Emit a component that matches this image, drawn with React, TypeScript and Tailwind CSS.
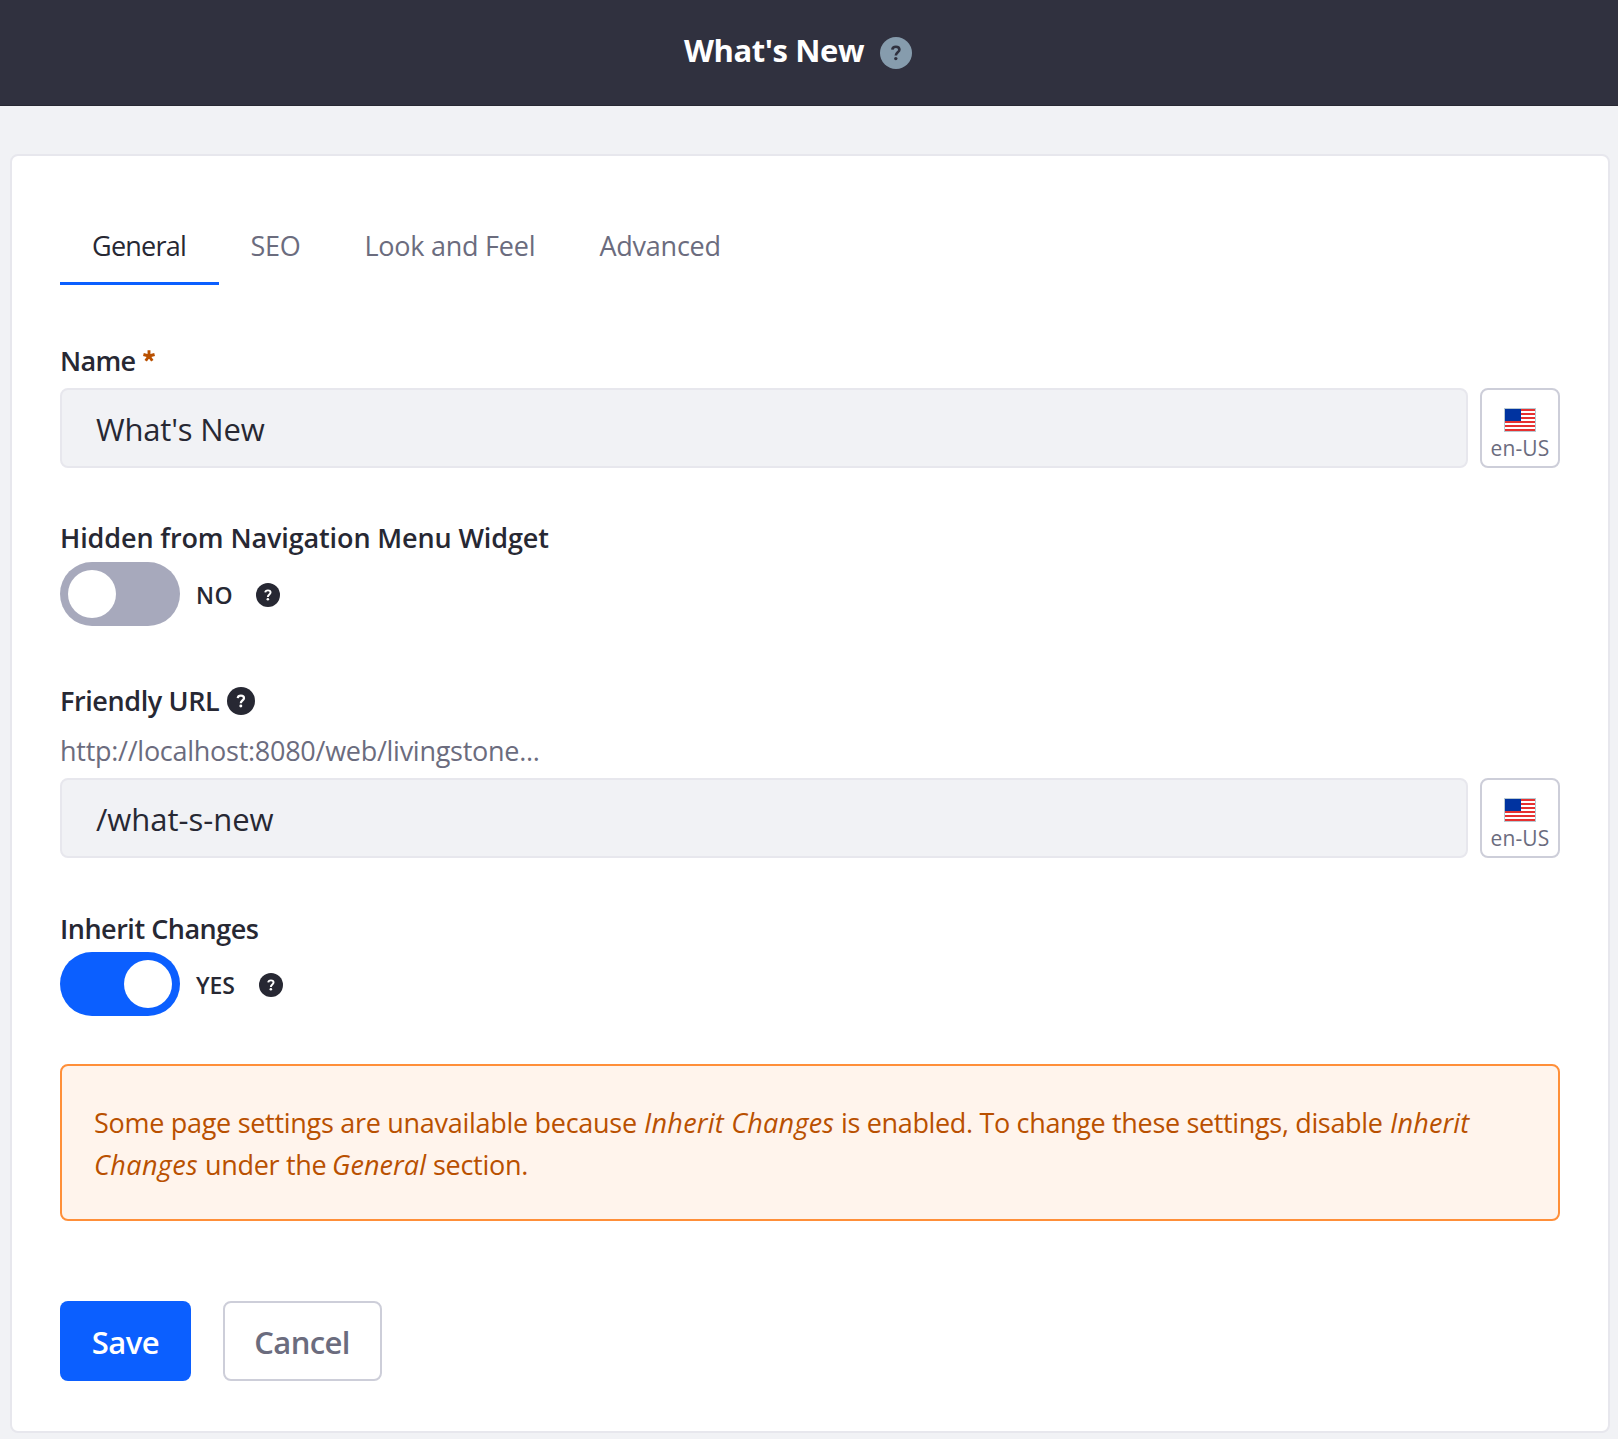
import type { ReactNode } from "react";

function HelpIcon({ className }: { className: string }) {
  return (
    <svg viewBox="0 0 32 32" className={"shrink-0 " + className} aria-hidden="true">
      <circle cx="16" cy="16" r="16" fill="currentColor" />
      <path
        d="M12.3 12.6C12.5 10.7 14 9.8 15.9 9.8c2 0 3.5 1 3.5 3 0 2.5-3.6 2.7-3.6 5.8"
        fill="none"
        className="stroke-(--mark)"
        strokeWidth="2.6"
      />
      <circle cx="15.8" cy="21.6" r="1.7" className="fill-(--mark)" />
    </svg>
  );
}

function Asterisk() {
  return (
    <svg viewBox="0 0 12 12" className="mt-[10px] h-3 w-3 shrink-0 text-[#b95000]" aria-hidden="true">
      <path
        d="M6 6V.2M6 6 .4 4.5M6 6l5.6-1.5M6 6l-3.3 4.8M6 6l3.3 4.8"
        fill="none"
        stroke="currentColor"
        strokeWidth="2.9"
      />
    </svg>
  );
}

function FlagUS() {
  return (
    <svg viewBox="0 0 32 24" className="h-6 w-8" shapeRendering="crispEdges" aria-hidden="true">
      <rect width="32" height="24" fill="#b9c9d2" />
      <rect x="1" y="1" width="30" height="22" fill="#fff" />
      {[1, 5, 9, 13, 17, 21].map((y) => (
        <rect key={y} x="1" y={y} width="30" height="2" fill="#e63030" />
      ))}
      <rect x="1" y="1" width="16" height="12" fill="#0033a0" />
    </svg>
  );
}

function Field({ children }: { children: ReactNode }) {
  return (
    <div className="flex gap-3">
      <div className="h-20 w-[1408px] rounded-lg border-2 border-[#e7e7ed] bg-[#f1f2f5] pt-px pl-[34px] text-[31px] leading-[76px]">
        {children}
      </div>
      <button className="flex h-20 w-20 flex-col items-center rounded-lg border-2 border-[#cdced9] bg-white pt-[18px] text-[#6b6c7e]">
        <FlagUS />
        <span className="text-[21px] leading-8 tracking-[0.15px]">en-US</span>
      </button>
    </div>
  );
}

function Toggle({ on }: { on?: boolean }) {
  return (
    <div
      className={
        "flex h-16 w-[120px] items-center rounded-full px-2 " +
        (on ? "justify-end bg-[#0b5fff]" : "justify-start bg-[#a7a9bc]")
      }
    >
      <div className="h-12 w-12 rounded-full bg-white" />
    </div>
  );
}

export default function App() {
  return (
    <div className="h-[1439px] w-[1618px] overflow-hidden bg-[#f1f2f5] font-['Open_Sans',sans-serif] text-[27px] text-[#272833]">
      <header className="flex h-[106px] items-start border-b border-[#272833] bg-[#30313f] pl-[684px]">
        <h1 className="mt-[30px] w-[196px] text-[31px] leading-10 font-bold tracking-[-0.43px] whitespace-nowrap text-white">
          What's New
        </h1>
        <HelpIcon className="mt-[37px] h-8 w-8 text-[#869cad] [--mark:#30313f]" />
      </header>

      <main className="mt-12 ml-[10px] h-[1279px] w-[1600px] rounded-lg border-2 border-[#e7e7ed] bg-white px-12 pt-[53px]">
        <nav className="flex h-[76px] leading-[73px] whitespace-nowrap text-[#6b6c7e]">
          <div className="w-[159px] border-b-3 border-[#0b5fff] pl-8 tracking-[-0.75px] text-[#272833]">General</div>
          <div className="w-[114px] pl-[31.5px] tracking-[-0.3px]">SEO</div>
          <div className="w-[235px] pl-[31.5px] tracking-[-0.25px]">Look and Feel</div>
          <div className="pl-[31.5px] tracking-[-0.25px]">Advanced</div>
        </nav>

        <div className="mt-[55px] mb-[7px] flex h-[41px] leading-[41px] font-semibold">
          <span className="w-[83px] tracking-[-0.7px]">Name</span>
          <Asterisk />
        </div>
        <Field>
          <span className="tracking-[-0.18px]">What's New</span>
        </Field>

        <div className="mt-[49px] h-[41px] leading-[41px] font-semibold tracking-[-0.12px]">
          Hidden from Navigation Menu Widget
        </div>
        <div className="mt-1 flex items-center">
          <Toggle />
          <span className="mt-[2px] ml-4 w-[60px] text-[23px] leading-8 font-semibold tracking-[0.4px]">NO</span>
          <HelpIcon className="mt-[2px] h-6 w-6 [--mark:#fff]" />
        </div>

        <div className="mt-[54px] flex h-[41px] leading-[41px] font-semibold">
          <span className="w-[167px] tracking-[-0.4px]">Friendly URL</span>
          <HelpIcon className="mt-[7px] h-7 w-7 [--mark:#fff]" />
        </div>
        <div className="mt-[9px] mb-[7px] h-[41px] leading-[41px] tracking-[-0.27px] text-[#6b6c7e]">
          http://localhost:8080/web/livingstone...
        </div>
        <Field>
          <span className="tracking-[-0.02px]">/what-s-new</span>
        </Field>

        <div className="mt-[50px] h-[41px] leading-[41px] font-semibold tracking-[-0.48px]">Inherit Changes</div>
        <div className="mt-[3px] flex items-center">
          <Toggle on />
          <span className="mt-[2px] ml-4 w-[63px] text-[23px] leading-8 font-semibold tracking-[-0.1px]">YES</span>
          <HelpIcon className="mt-[2px] h-6 w-6 [--mark:#fff]" />
        </div>

        <div className="mt-12 h-[157px] rounded-lg border-2 border-[#ff8f39] bg-[#fff4ec] pt-[36px] pl-8 leading-[42px] whitespace-nowrap text-[#b95000]">
          <p className="flex">
            <span className="w-[550px] tracking-[-0.29px]">Some page settings are unavailable because </span>
            <em className="w-[197px] tracking-[0.24px]">Inherit Changes </em>
            <span className="w-[549px] tracking-[-0.34px]">is enabled. To change these settings, disable </span>
            <em className="tracking-[0.15px]">Inherit</em>
          </p>
          <p className="flex">
            <em className="w-[111px] tracking-[0.4px]">Changes </em>
            <span className="w-[127px] tracking-[-0.32px]">under the </span>
            <em className="w-[101px] tracking-[0.08px]">General </em>
            <span className="tracking-[-0.28px]">section.</span>
          </p>
        </div>

        <div className="mt-20 flex gap-8 text-[31px] leading-[78px] font-semibold">
          <button className="h-20 w-[131px] rounded-lg bg-[#0b5fff] pt-[2px] tracking-[-0.5px] text-white">Save</button>
          <button className="h-20 w-[159px] rounded-lg border-2 border-[#cdced9] bg-white pt-[2px] pr-px leading-[74px] tracking-[-0.65px] text-[#6b6c7e]">
            Cancel
          </button>
        </div>
      </main>
    </div>
  );
}
